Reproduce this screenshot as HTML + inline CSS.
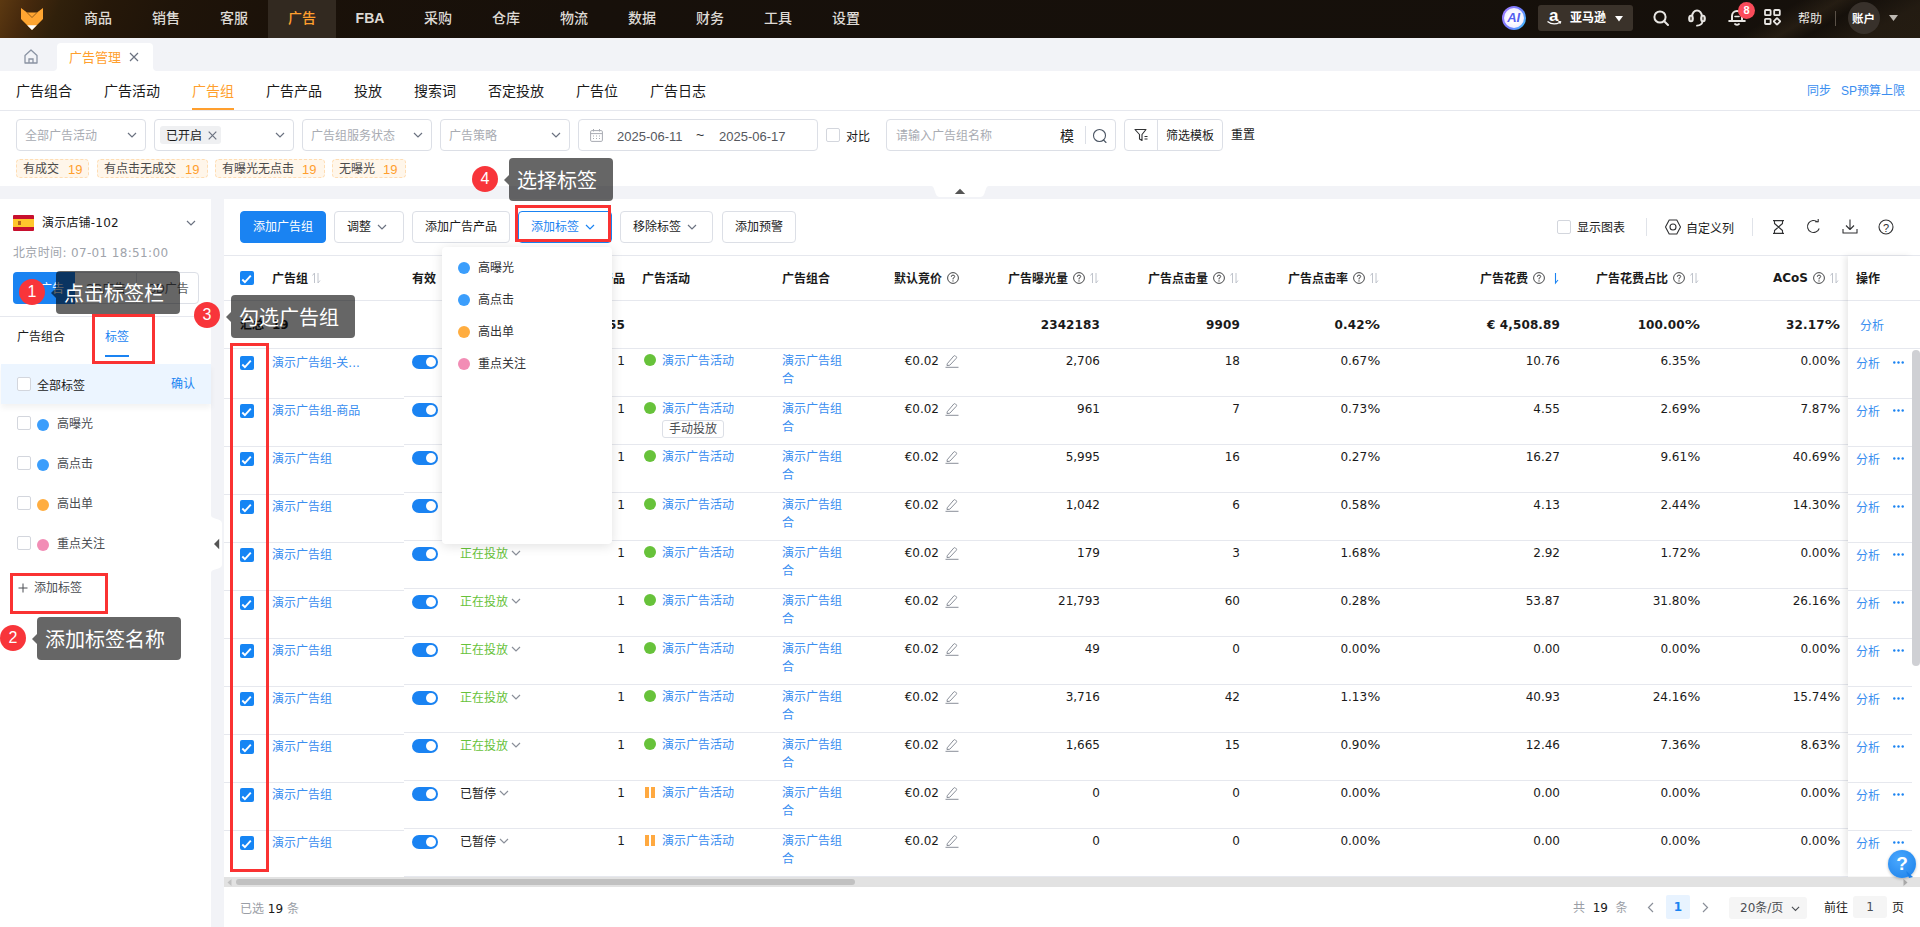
<!DOCTYPE html><html lang="zh-CN"><head><meta charset="utf-8"><title>广告管理</title><style>
*{box-sizing:border-box;margin:0;padding:0}
html,body{width:1920px;height:927px;overflow:hidden;background:#f2f3f7}
body{position:relative;font-family:"Liberation Sans","Noto Sans CJK SC",sans-serif;font-size:12px;color:#1a1a1a;-webkit-font-smoothing:antialiased}
.a{position:absolute;white-space:nowrap}
.t{position:absolute;white-space:nowrap;height:20px;line-height:20px;margin-top:1px}
.t.r,.t.n{margin-top:0}
.p{font-style:normal;display:inline-block;margin-left:1.5px;transform:scaleX(1.13);transform-origin:right center}
.b .p{margin-left:3.2px;transform:scaleX(1.27)}
.dv{font-family:"DejaVu Sans","Noto Sans CJK SC",sans-serif}
.b{font-weight:bold}
.blue{color:#3a8ef0}
.r{text-align:right}
/* top nav */
#nav{left:0;top:0;width:1920px;height:38px;background:linear-gradient(112deg,#5c3911 0%,#46290d 1.5%,#30200b 3.2%,#261809 5.5%,#1f1409 9%,#1a1109 16%,#17100a 30%,#15100b 100%)}
.ni{position:absolute;top:0;height:38px;line-height:36px;width:68px;text-align:center;font-size:14px;color:#dedad5;font-weight:500}
.ni.on{background:#322920;color:#ff9f2e}
.ni.b{font-weight:bold}
/* tabbar */
#tabbar{left:0;top:38px;width:1920px;height:33px;background:#f2f3f7}
#subnav{left:0;top:71px;width:1920px;height:40px;background:#fff;border-bottom:1px solid #e6e8ee}
.sn{position:absolute;top:1px;height:39px;line-height:39px;font-size:14px;color:#1a1a1a}
#filter{left:0;top:111px;width:1920px;height:75px;background:#fff}
.sel{position:absolute;top:8px;height:32px;border:1px solid #dcdfe6;border-radius:4px;background:#fff}
.ph{color:#a8abb2}
.tag{position:absolute;top:48px;height:19px;border:1px dashed #ffddb3;background:#fff6ea;border-radius:4px;line-height:17px;font-size:12px;color:#4a4a4a}
.tag i{font-style:normal;color:#ff9f2e;position:absolute;top:0.5px;font-size:13px}
/* panels */
#left{left:0;top:198px;width:211px;height:729px;background:linear-gradient(#f2f3f7 1px,#fff 1px)}
#main{left:224px;top:199px;width:1696px;height:728px;background:#fff}
.btn{position:absolute;top:211px;height:32px;border:1px solid #dcdfe6;border-radius:4px;background:#fff;line-height:30px;font-size:12px;color:#1a1a1a;padding-left:12px}
.cb{position:absolute;width:14px;height:14px;border:1px solid #d3d6dd;border-radius:2px;background:#fff}
.cbc{position:absolute;width:14px;height:14px;border-radius:2px;background:#1685f4}
.hl{position:absolute;height:1px;background:#e6e8ee}
.sw{position:absolute;width:26px;height:14px;border-radius:7px;background:#1a83f2}
.sw:after{content:"";position:absolute;right:2px;top:2px;width:10px;height:10px;border-radius:5px;background:#fff}
.dot{position:absolute;width:12px;height:12px;border-radius:6px}
.tip{position:absolute;background:rgba(0,0,0,.6);border-radius:4px;color:#fff;font-size:20px;white-space:nowrap}
.tip:before{content:"";position:absolute;left:-5px;top:50%;margin-top:-5px;border:5px solid transparent;border-left:0;border-right:5px solid rgba(0,0,0,.6)}
.num{position:absolute;width:26px;height:26px;border-radius:13px;background:#f8353a;color:#fff;font-size:16px;line-height:26px;text-align:center}
.rb{position:absolute;border:3px solid #fa3232}
svg{position:absolute;overflow:visible}
</style></head><body>
<div id="nav" class="a">
<div class="a" style="left:1500px;top:0;width:420px;height:38px;background:linear-gradient(150deg,rgba(255,255,255,0) 62%,rgba(120,95,60,.16) 70%,rgba(255,255,255,0) 76%,rgba(120,95,60,.14) 88%,rgba(90,70,40,.22) 100%)"></div>
<svg style="left:21px;top:8px" width="22" height="22" viewBox="0 0 22 22"><polygon points="0,0 6,4.5 16,4.5 22,0 22,11 11,22 0,11" fill="#ffa531"/><polygon points="6.2,17.2 15.8,17.2 11,22" fill="#fff"/><polyline points="6,4.5 11,9.5 16,4.5" fill="none" stroke="#7a4a14" stroke-width="0.8"/></svg>
<div class="ni" style="left:64px">商品</div>
<div class="ni" style="left:132px">销售</div>
<div class="ni" style="left:200px">客服</div>
<div class="ni on" style="left:268px">广告</div>
<div class="ni b" style="left:336px">FBA</div>
<div class="ni" style="left:404px">采购</div>
<div class="ni" style="left:472px">仓库</div>
<div class="ni" style="left:540px">物流</div>
<div class="ni" style="left:608px">数据</div>
<div class="ni" style="left:676px">财务</div>
<div class="ni" style="left:744px">工具</div>
<div class="ni" style="left:812px">设置</div>
<div class="a" style="left:1502px;top:6px;width:24px;height:24px;border-radius:12px;background:linear-gradient(120deg,#a57bff,#6d7dff 55%,#38c8ff);"></div>
<div class="a" style="left:1504px;top:8px;width:20px;height:20px;border-radius:10px;background:radial-gradient(circle,#ffffff 30%,#e6e0ff 100%);color:#5560f0;font-size:13px;font-weight:bold;font-style:italic;line-height:20px;text-align:center;letter-spacing:-0.3px;text-indent:-1px">AI</div>
<div class="a" style="left:1538px;top:5px;width:95px;height:26px;border-radius:3px;background:#3a322a"></div>
<div class="a" style="left:1549px;top:6px;font-size:17px;font-weight:bold;color:#fff;line-height:20px;font-family:'Liberation Sans',sans-serif">a</div>
<svg style="left:1547px;top:21px" width="15" height="5" viewBox="0 0 15 5"><path d="M0.5,0.5 Q6.5,5 13,1.2" fill="none" stroke="#fff" stroke-width="1.3"/><path d="M11.2,0.3 L14,0.7 L12.8,3" fill="none" stroke="#fff" stroke-width="1"/></svg>
<div class="t b" style="left:1570px;top:7px;color:#fff;font-size:12px">亚马逊</div>
<svg style="left:1615px;top:16px" width="8" height="6" viewBox="0 0 8 6"><polygon points="0,0 8,0 4,5.6" fill="#fff"/></svg>
<svg style="left:1653px;top:10px" width="17" height="17" viewBox="0 0 17 17"><circle cx="7" cy="7" r="5.6" fill="none" stroke="#e8e6e3" stroke-width="2"/><path d="M11.2,11.2 L15,15" stroke="#e8e6e3" stroke-width="2" stroke-linecap="round"/></svg>
<svg style="left:1687px;top:9px" width="20" height="18" viewBox="0 0 20 18"><path d="M5.2,7.5 V7 A4.8,5.6 0 0 1 14.8,7 V7.5" fill="none" stroke="#e8e6e3" stroke-width="2"/><ellipse cx="4" cy="9.5" rx="1.9" ry="2.9" fill="#6b655e" stroke="#e8e6e3" stroke-width="1.9"/><ellipse cx="16" cy="9.5" rx="1.9" ry="2.9" fill="#6b655e" stroke="#e8e6e3" stroke-width="1.9"/><path d="M15.5,12.5 Q15,16.3 10,16.6" fill="none" stroke="#e8e6e3" stroke-width="1.8" stroke-linecap="round"/></svg>
<svg style="left:1728px;top:8px" width="18" height="18" viewBox="0 0 18 18"><path d="M4,12.5 L4,8 A5,5 0 0 1 14,8 L14,12.5" fill="none" stroke="#e8e6e3" stroke-width="2"/><path d="M1.2,13 L16.8,13" stroke="#e8e6e3" stroke-width="2" stroke-linecap="round"/><path d="M7,16 Q9,17.6 11,16" fill="none" stroke="#e8e6e3" stroke-width="1.8" stroke-linecap="round"/><path d="M7,8.5 L11,8.5" stroke="#e8e6e3" stroke-width="1.6" stroke-linecap="round"/></svg>
<div class="a b" style="left:1738px;top:2px;width:17px;height:17px;border-radius:9px;background:#fa4b5a;color:#fff;font-size:11px;line-height:17px;text-align:center;font-family:'Liberation Sans',sans-serif">8</div>
<svg style="left:1764px;top:9px" width="17" height="17" viewBox="0 0 17 17"><rect x="1" y="1" width="5.6" height="5.2" rx="0.8" fill="none" stroke="#e8e6e3" stroke-width="1.8"/><rect x="10.2" y="1" width="5.6" height="5.2" rx="0.8" fill="none" stroke="#e8e6e3" stroke-width="1.8"/><rect x="1" y="9.8" width="5.6" height="5.2" rx="0.8" fill="none" stroke="#e8e6e3" stroke-width="1.8"/><rect x="10.6" y="10" width="4.8" height="4.8" rx="0.8" fill="none" stroke="#e8e6e3" stroke-width="1.8" transform="rotate(45 13 12.4)"/></svg>
<div class="t" style="left:1798px;top:8px;color:#e8e6e3;font-size:12px">帮助</div>
<div class="a" style="left:1835px;top:11px;width:1px;height:15px;background:#5a5148"></div>
<div class="a" style="left:1848px;top:2px;width:32px;height:32px;border-radius:16px;background:#38312b"></div>
<div class="t b" style="left:1852px;top:8px;color:#fff;font-size:11.5px">账户</div>
<svg style="left:1889px;top:15px" width="9" height="6" viewBox="0 0 9 6"><polygon points="0,0 9,0 4.5,6" fill="#bdb8b2"/></svg>
</div>
<div id="tabbar" class="a"></div>
<div class="a" style="left:57px;top:43px;width:96px;height:28px;background:#fff;border-radius:4px 4px 0 0"></div>
<div class="t" style="left:69px;top:47px;font-size:13px;color:#ff9f2e">广告管理</div>
<svg style="left:53px;top:67px" width="4" height="4" viewBox="0 0 4 4"><path d="M4,0 L4,4 L0,4 Q4,4 4,0 Z" fill="#fff"/></svg><svg style="left:153px;top:67px" width="4" height="4" viewBox="0 0 4 4"><path d="M0,0 L0,4 L4,4 Q0,4 0,0 Z" fill="#fff"/></svg>
<svg style="left:24px;top:49px" width="14" height="15" viewBox="0 0 14 15"><path d="M1,6.5 L7,1 L13,6.5 L13,14 L1,14 Z" fill="none" stroke="#8a93a3" stroke-width="1.3" stroke-linejoin="round"/><path d="M5,14 L5,10 L9,10 L9,14" fill="none" stroke="#8a93a3" stroke-width="1.3"/></svg>
<svg style="left:129px;top:52px" width="10" height="10" viewBox="0 0 10 10"><path d="M1,1 L9,9 M9,1 L1,9" stroke="#6b7280" stroke-width="1.2"/></svg>
<div id="subnav" class="a">
<div class="sn" style="left:16px;">广告组合</div>
<div class="sn" style="left:104px;">广告活动</div>
<div class="sn" style="left:192px;color:#ff9f2e">广告组</div>
<div class="sn" style="left:266px;">广告产品</div>
<div class="sn" style="left:354px;">投放</div>
<div class="sn" style="left:414px;">搜索词</div>
<div class="sn" style="left:488px;">否定投放</div>
<div class="sn" style="left:576px;">广告位</div>
<div class="sn" style="left:650px;">广告日志</div>
<div class="a" style="left:192px;top:37px;width:42px;height:2px;background:#ff9f2e"></div>
<div class="t blue" style="left:1807px;top:9px">同步</div><div class="t blue" style="left:1841px;top:9px">SP预算上限</div>
</div>
<div id="filter" class="a">
<div class="sel" style="left:16px;width:130px"><div class="t ph" style="left:8px;top:5px">全部广告活动</div><svg style="left:110px;top:12px" width="10" height="6" viewBox="0 0 10 6"><path d="M1,1 L5,5 L9,1" fill="none" stroke="#6b7280" stroke-width="1.2"/></svg></div>
<div class="sel" style="left:154px;width:140px"><div class="a" style="left:5px;top:6px;width:61px;height:18px;background:#eff0f2;border-radius:3px"></div><div class="t" style="left:11px;top:5px;color:#1a1a1a">已开启</div><svg style="left:53px;top:11px" width="9" height="9" viewBox="0 0 9 9"><path d="M0.7,0.7 L8.3,8.3 M8.3,0.7 L0.7,8.3" stroke="#6b7280" stroke-width="1.2"/></svg><svg style="left:120px;top:12px" width="10" height="6" viewBox="0 0 10 6"><path d="M1,1 L5,5 L9,1" fill="none" stroke="#6b7280" stroke-width="1.2"/></svg></div>
<div class="sel" style="left:302px;width:130px"><div class="t ph" style="left:8px;top:5px">广告组服务状态</div><svg style="left:110px;top:12px" width="10" height="6" viewBox="0 0 10 6"><path d="M1,1 L5,5 L9,1" fill="none" stroke="#6b7280" stroke-width="1.2"/></svg></div>
<div class="sel" style="left:440px;width:130px"><div class="t ph" style="left:8px;top:5px">广告策略</div><svg style="left:110px;top:12px" width="10" height="6" viewBox="0 0 10 6"><path d="M1,1 L5,5 L9,1" fill="none" stroke="#6b7280" stroke-width="1.2"/></svg></div>
<div class="sel" style="left:578px;width:240px">
<svg style="left:11px;top:9px" width="13" height="13" viewBox="0 0 13 13"><rect x="0.6" y="1.6" width="11.8" height="10.8" rx="1.2" fill="none" stroke="#a8abb2" stroke-width="1"/><path d="M0.6,4.6 L12.4,4.6 M3.5,0 L3.5,2.5 M9.5,0 L9.5,2.5" stroke="#a8abb2" stroke-width="1"/><path d="M3,7 h1 M6,7 h1 M9,7 h1 M3,9.5 h1 M6,9.5 h1 M9,9.5 h1" stroke="#a8abb2" stroke-width="1"/></svg>
<div class="t" style="left:38px;top:6px;font-size:13px;color:#55585e">2025-06-11</div><div class="t" style="left:117px;top:4px;font-size:14px;color:#303133">~</div><div class="t" style="left:140px;top:6px;font-size:13px;color:#55585e">2025-06-17</div></div>
<div class="cb" style="left:826px;top:17px"></div><div class="t" style="left:846px;top:15px">对比</div>
<div class="sel" style="left:886px;width:230px"><div class="t ph" style="left:9px;top:5px">请输入广告组名称</div><div class="t" style="left:173px;top:5px;font-size:14px;color:#1a1a1a">模</div><div class="a" style="left:198px;top:6px;width:1px;height:18px;background:#dcdfe6"></div>
<svg style="left:205px;top:8px" width="16" height="16" viewBox="0 0 16 16"><circle cx="7.5" cy="7.5" r="6" fill="none" stroke="#4b5563" stroke-width="1.1"/><path d="M11.5,12 L14,14.5" stroke="#4b5563" stroke-width="1.1" stroke-linecap="round"/></svg></div>
<div class="sel" style="left:1124px;width:99px"><div class="a" style="left:32px;top:0;width:1px;height:30px;background:#dcdfe6"></div>
<svg style="left:9px;top:8px" width="15" height="15" viewBox="0 0 15 15"><path d="M1,1.5 L12,1.5 L8,6.5 L8,12.5 L5.5,11 L5.5,6.5 Z" fill="none" stroke="#303133" stroke-width="1.1" stroke-linejoin="round"/><path d="M10.5,8.5 h3 M10.5,11 h3" stroke="#303133" stroke-width="1.1"/></svg>
<div class="t" style="left:41px;top:5px">筛选模板</div></div>
<div class="t" style="left:1231px;top:13px">重置</div>
<div class="tag" style="left:16px;width:73px"><span style="position:absolute;left:6px;top:1px">有成交</span><i style="left:51px">19</i></div>
<div class="tag" style="left:97px;width:111px"><span style="position:absolute;left:6px;top:1px">有点击无成交</span><i style="left:87px">19</i></div>
<div class="tag" style="left:215px;width:110px"><span style="position:absolute;left:6px;top:1px">有曝光无点击</span><i style="left:86px">19</i></div>
<div class="tag" style="left:332px;width:74px"><span style="position:absolute;left:6px;top:1px">无曝光</span><i style="left:50px">19</i></div>
</div>
<svg style="left:931px;top:186px" width="58" height="12" viewBox="0 0 58 12"><path d="M0,0 C2,0 2.6,1.5 3.4,4 L4.8,8 Q5.8,11 9,11 L49,11 Q52.2,11 53.2,8 L54.6,4 C55.4,1.5 56,0 58,0 Z" fill="#fff"/><polygon points="23.8,8 34.2,8 29,2.8" fill="#555"/></svg>
<div id="left" class="a">
<div class="a" style="left:13px;top:17px;width:21px;height:16px;background:#c8102e;border-radius:1px;overflow:hidden"><div class="a" style="left:0;top:4px;width:21px;height:8px;background:#ffc72c"></div><div class="a" style="left:5px;top:6px;width:3px;height:4px;background:#b5651d"></div></div>
<div class="t dv" style="left:42px;top:14px;color:#1a1a1a;letter-spacing:0.2px">演示店铺-102</div>
<svg style="left:186px;top:22px" width="10" height="6" viewBox="0 0 10 6"><path d="M1,1 L5,5 L9,1" fill="none" stroke="#6b7280" stroke-width="1.2"/></svg>
<div class="t dv" style="left:13px;top:44px;color:#a0a4ab;font-size:12px;letter-spacing:0.35px">北京时间: 07-01 18:51:00</div>
<div class="a" style="left:13px;top:74px;width:186px;height:32px;border:1px solid #dcdfe6;border-radius:4px;background:#fff"></div>
<div class="a" style="left:13px;top:74px;width:62px;height:32px;border-radius:4px 0 0 4px;background:#1a83f2"></div>
<div class="a" style="left:136px;top:75px;width:1px;height:30px;background:#dcdfe6"></div>
<div class="t" style="left:24px;top:80px;color:#fff">SP广告</div><div class="t" style="left:86px;top:80px;color:#606266">SB广告</div><div class="t" style="left:148px;top:80px;color:#606266">SD广告</div>
<div class="hl" style="left:0;top:118px;width:211px"></div>
<div class="t" style="left:17px;top:128px;color:#1a1a1a">广告组合</div><div class="t" style="left:105px;top:128px;color:#1a83f2">标签</div>
<div class="a" style="left:105px;top:157px;width:24px;height:2px;background:#1a83f2"></div>
<div class="a" style="left:1px;top:166px;width:210px;height:40px;background:#ecf5ff;box-shadow:0 4px 6px rgba(0,0,0,.05)"></div>
<div class="cb" style="left:17px;top:179px"></div><div class="t" style="left:37px;top:177px">全部标签</div><div class="t" style="left:171px;top:175px;color:#1a83f2">确认</div>
<div class="cb" style="left:17px;top:218px"></div><div class="dot" style="left:37px;top:221px;background:#3b9efc"></div><div class="t" style="left:57px;top:215px;color:#4a4d52">高曝光</div>
<div class="cb" style="left:17px;top:258px"></div><div class="dot" style="left:37px;top:261px;background:#3b9efc"></div><div class="t" style="left:57px;top:255px;color:#4a4d52">高点击</div>
<div class="cb" style="left:17px;top:298px"></div><div class="dot" style="left:37px;top:301px;background:#ffad40"></div><div class="t" style="left:57px;top:295px;color:#4a4d52">高出单</div>
<div class="cb" style="left:17px;top:338px"></div><div class="dot" style="left:37px;top:341px;background:#f28db5"></div><div class="t" style="left:57px;top:335px;color:#4a4d52">重点关注</div>
<svg style="left:18px;top:385px" width="10" height="10" viewBox="0 0 10 10"><path d="M5,0.5 V9.5 M0.5,5 H9.5" stroke="#4a4d52" stroke-width="1"/></svg><div class="t" style="left:34px;top:379px;color:#4a4d52">添加标签</div>
</div>
<svg style="left:211px;top:515px" width="12" height="58" viewBox="0 0 12 58"><path d="M0,0 C0,2 1.5,2.6 4,3.4 L8,4.8 Q11,5.8 11,9 L11,49 Q11,52.2 8,53.2 L4,54.6 C1.5,55.4 0,56 0,58 Z" fill="#fff"/><polygon points="8.2,23.8 8.2,34.2 3,29" fill="#555"/></svg>
<div id="main" class="a"></div>
<div class="btn" style="left:240px;width:86px;background:#1a83f2;border-color:#1a83f2;color:#fff">添加广告组</div>
<div class="btn" style="left:334px;width:70px">调整<svg style="left:42px;top:12px" width="10" height="6" viewBox="0 0 10 6"><path d="M1,1 L5,5 L9,1" fill="none" stroke="#6b7280" stroke-width="1.2"/></svg></div>
<div class="btn" style="left:412px;width:98px">添加广告产品</div>
<div class="btn" style="left:518px;width:94px;border-color:#1a83f2;color:#1a83f2">添加标签<svg style="left:66px;top:12px" width="10" height="6" viewBox="0 0 10 6"><path d="M1,1 L5,5 L9,1" fill="none" stroke="#1a83f2" stroke-width="1.2"/></svg></div>
<div class="btn" style="left:620px;width:93px">移除标签<svg style="left:66px;top:12px" width="10" height="6" viewBox="0 0 10 6"><path d="M1,1 L5,5 L9,1" fill="none" stroke="#6b7280" stroke-width="1.2"/></svg></div>
<div class="btn" style="left:722px;width:74px">添加预警</div>
<div class="cb" style="left:1557px;top:220px"></div><div class="t" style="left:1577px;top:217px">显示图表</div>
<div class="a" style="left:1646px;top:218px;width:1px;height:18px;background:#e0e3e9"></div>
<svg style="left:1665px;top:219px" width="16" height="16" viewBox="0 0 16 16"><polygon points="4.2,1 11.8,1 15.5,8 11.8,15 4.2,15 0.5,8" fill="none" stroke="#303133" stroke-width="1.1" stroke-linejoin="round"/><circle cx="8" cy="8" r="3" fill="none" stroke="#303133" stroke-width="1.1"/></svg>
<div class="t" style="left:1686px;top:218px">自定义列</div>
<div class="a" style="left:1752px;top:218px;width:1px;height:18px;background:#e0e3e9"></div>
<svg style="left:1772px;top:220px" width="13" height="14" viewBox="0 0 13 14"><path d="M1,0.6 H12 M1,13.4 H12 M2.5,0.6 V3.5 L6.5,7 L10.5,3.5 V0.6 M2.5,13.4 V10.5 L6.5,7 L10.5,10.5 V13.4" fill="none" stroke="#303133" stroke-width="1.1" stroke-linejoin="round"/></svg>
<svg style="left:1806px;top:219px" width="15" height="15" viewBox="0 0 15 15"><path d="M13.2,9.5 A6,6 0 1 1 11.5,3" fill="none" stroke="#303133" stroke-width="1.1"/><path d="M9,2.8 H12.2 V0" fill="none" stroke="#303133" stroke-width="1.1"/></svg>
<svg style="left:1842px;top:219px" width="16" height="15" viewBox="0 0 16 15"><path d="M8,0.5 V10 M4,6.5 L8,10.5 L12,6.5 M1,10 V14 H15 V10" fill="none" stroke="#303133" stroke-width="1.1" stroke-linejoin="round"/></svg>
<svg style="left:1878px;top:219px" width="16" height="16" viewBox="0 0 16 16"><circle cx="8" cy="8" r="7" fill="none" stroke="#303133" stroke-width="1.1"/></svg><div class="t" style="left:1878px;top:217px;width:16px;text-align:center;font-size:11px;color:#303133">?</div>
<div class="hl" style="left:224px;top:255px;width:1696px"></div>
<div class="cbc" style="left:240px;top:271px"><svg style="left:0;top:0" width="14" height="14" viewBox="0 0 14 14"><path d="M2.3,8.5 L4.9,11.1 L10.8,4.6" fill="none" stroke="#fff" stroke-width="1.9"/></svg></div>
<div class="t b" style="left:272px;top:268px">广告组</div>
<svg style="left:311.5px;top:272.0px" width="9" height="12" viewBox="0 0 9 12"><path d="M2.5,11 V1 L0.5,3.5" fill="none" stroke="#c0c4cc" stroke-width="1"/><path d="M6,1 V11 L8,8.5" fill="none" stroke="#c0c4cc" stroke-width="1"/></svg>
<div class="t b" style="left:412px;top:268px">有效</div>
<div class="t b" style="left:460px;top:268px">状态</div>
<div class="t b" style="right:1295px;top:268px">广告产品</div>
<div class="t b" style="left:642px;top:268px">广告活动</div>
<div class="t b" style="left:782px;top:268px">广告组合</div>
<div class="t b" style="right:978px;top:268px">默认竞价</div>
<svg style="left:947.0px;top:272.0px" width="12" height="12" viewBox="0 0 12 12"><circle cx="6" cy="6" r="5.4" fill="none" stroke="#303133" stroke-width="0.9"/><path d="M4.3,4.8 Q4.3,3.1 6,3.1 Q7.7,3.1 7.7,4.6 Q7.7,5.6 6,6.3 L6,7.4" fill="none" stroke="#303133" stroke-width="0.9"/><circle cx="6" cy="8.9" r="0.6" fill="#303133"/></svg>
<div class="t b" style="right:852px;top:268px">广告曝光量</div>
<svg style="left:1073.0px;top:272.0px" width="12" height="12" viewBox="0 0 12 12"><circle cx="6" cy="6" r="5.4" fill="none" stroke="#303133" stroke-width="0.9"/><path d="M4.3,4.8 Q4.3,3.1 6,3.1 Q7.7,3.1 7.7,4.6 Q7.7,5.6 6,6.3 L6,7.4" fill="none" stroke="#303133" stroke-width="0.9"/><circle cx="6" cy="8.9" r="0.6" fill="#303133"/></svg>
<svg style="left:1089.5px;top:272.0px" width="9" height="12" viewBox="0 0 9 12"><path d="M2.5,11 V1 L0.5,3.5" fill="none" stroke="#c0c4cc" stroke-width="1"/><path d="M6,1 V11 L8,8.5" fill="none" stroke="#c0c4cc" stroke-width="1"/></svg>
<div class="t b" style="right:712px;top:268px">广告点击量</div>
<svg style="left:1213.0px;top:272.0px" width="12" height="12" viewBox="0 0 12 12"><circle cx="6" cy="6" r="5.4" fill="none" stroke="#303133" stroke-width="0.9"/><path d="M4.3,4.8 Q4.3,3.1 6,3.1 Q7.7,3.1 7.7,4.6 Q7.7,5.6 6,6.3 L6,7.4" fill="none" stroke="#303133" stroke-width="0.9"/><circle cx="6" cy="8.9" r="0.6" fill="#303133"/></svg>
<svg style="left:1229.5px;top:272.0px" width="9" height="12" viewBox="0 0 9 12"><path d="M2.5,11 V1 L0.5,3.5" fill="none" stroke="#c0c4cc" stroke-width="1"/><path d="M6,1 V11 L8,8.5" fill="none" stroke="#c0c4cc" stroke-width="1"/></svg>
<div class="t b" style="right:572px;top:268px">广告点击率</div>
<svg style="left:1353.0px;top:272.0px" width="12" height="12" viewBox="0 0 12 12"><circle cx="6" cy="6" r="5.4" fill="none" stroke="#303133" stroke-width="0.9"/><path d="M4.3,4.8 Q4.3,3.1 6,3.1 Q7.7,3.1 7.7,4.6 Q7.7,5.6 6,6.3 L6,7.4" fill="none" stroke="#303133" stroke-width="0.9"/><circle cx="6" cy="8.9" r="0.6" fill="#303133"/></svg>
<svg style="left:1369.5px;top:272.0px" width="9" height="12" viewBox="0 0 9 12"><path d="M2.5,11 V1 L0.5,3.5" fill="none" stroke="#c0c4cc" stroke-width="1"/><path d="M6,1 V11 L8,8.5" fill="none" stroke="#c0c4cc" stroke-width="1"/></svg>
<div class="t b" style="right:392px;top:268px">广告花费</div>
<svg style="left:1533.0px;top:272.0px" width="12" height="12" viewBox="0 0 12 12"><circle cx="6" cy="6" r="5.4" fill="none" stroke="#303133" stroke-width="0.9"/><path d="M4.3,4.8 Q4.3,3.1 6,3.1 Q7.7,3.1 7.7,4.6 Q7.7,5.6 6,6.3 L6,7.4" fill="none" stroke="#303133" stroke-width="0.9"/><circle cx="6" cy="8.9" r="0.6" fill="#303133"/></svg>
<svg style="left:1553px;top:272px" width="6" height="12" viewBox="0 0 6 12"><path d="M2.5,1 V11 L5,8" fill="none" stroke="#1a83f2" stroke-width="1.1"/></svg>
<div class="t b" style="right:252px;top:268px">广告花费占比</div>
<svg style="left:1673.0px;top:272.0px" width="12" height="12" viewBox="0 0 12 12"><circle cx="6" cy="6" r="5.4" fill="none" stroke="#303133" stroke-width="0.9"/><path d="M4.3,4.8 Q4.3,3.1 6,3.1 Q7.7,3.1 7.7,4.6 Q7.7,5.6 6,6.3 L6,7.4" fill="none" stroke="#303133" stroke-width="0.9"/><circle cx="6" cy="8.9" r="0.6" fill="#303133"/></svg>
<svg style="left:1689.5px;top:272.0px" width="9" height="12" viewBox="0 0 9 12"><path d="M2.5,11 V1 L0.5,3.5" fill="none" stroke="#c0c4cc" stroke-width="1"/><path d="M6,1 V11 L8,8.5" fill="none" stroke="#c0c4cc" stroke-width="1"/></svg>
<div class="t b dv n" style="right:112px;top:268px">ACoS</div>
<svg style="left:1813.0px;top:272.0px" width="12" height="12" viewBox="0 0 12 12"><circle cx="6" cy="6" r="5.4" fill="none" stroke="#303133" stroke-width="0.9"/><path d="M4.3,4.8 Q4.3,3.1 6,3.1 Q7.7,3.1 7.7,4.6 Q7.7,5.6 6,6.3 L6,7.4" fill="none" stroke="#303133" stroke-width="0.9"/><circle cx="6" cy="8.9" r="0.6" fill="#303133"/></svg>
<svg style="left:1829.5px;top:272.0px" width="9" height="12" viewBox="0 0 9 12"><path d="M2.5,11 V1 L0.5,3.5" fill="none" stroke="#c0c4cc" stroke-width="1"/><path d="M6,1 V11 L8,8.5" fill="none" stroke="#c0c4cc" stroke-width="1"/></svg>
<div class="hl" style="left:224px;top:300px;width:1696px"></div>
<div class="t b" style="left:240px;top:314px">汇总</div><div class="t b dv" style="left:272px;top:314px">19</div>
<div class="t b dv" style="right:1295px;top:314px;letter-spacing:0.12px">55</div>
<div class="t b dv" style="right:820px;top:314px;letter-spacing:0.12px">2342183</div>
<div class="t b dv" style="right:680px;top:314px;letter-spacing:0.12px">9909</div>
<div class="t b dv" style="right:540px;top:314px;letter-spacing:0.12px">0.42<i class="p">%</i></div>
<div class="t b dv" style="right:360px;top:314px;letter-spacing:0.12px">€ 4,508.89</div>
<div class="t b dv" style="right:220px;top:314px;letter-spacing:0.12px">100.00<i class="p">%</i></div>
<div class="t b dv" style="right:80px;top:314px;letter-spacing:0.12px">32.17<i class="p">%</i></div>
<div class="hl" style="left:224px;top:348px;width:1696px"></div>
<div class="cbc" style="left:240px;top:356px"><svg style="left:0;top:0" width="14" height="14" viewBox="0 0 14 14"><path d="M2.3,8.5 L4.9,11.1 L10.8,4.6" fill="none" stroke="#fff" stroke-width="1.9"/></svg></div>
<div class="t blue dv" style="left:272px;top:352px">演示广告组-关...</div>
<div class="sw" style="left:412px;top:355px"></div>
<div class="t" style="left:460px;top:351px;color:#67c23a">正在投放</div><svg style="left:511px;top:358px" width="10" height="6" viewBox="0 0 10 6"><path d="M1,1 L5,5 L9,1" fill="none" stroke="#8a8f99" stroke-width="1.2"/></svg>
<div class="dot" style="left:644px;top:354px;background:#67c23a"></div>
<div class="t dv r" style="right:1295px;top:351px">1</div>
<div class="t blue" style="left:662px;top:350px">演示广告活动</div>
<div class="a blue" style="left:782px;top:352px;width:62px;white-space:normal;line-height:18px">演示广告组合</div>
<div class="t dv r" style="right:981px;top:351px">€0.02</div>
<svg style="left:944.5px;top:353.5px" width="14" height="14" viewBox="0 0 14 14"><path d="M2.2,9.8 L8.8,2 Q9.6,1.2 10.5,2 L11.3,2.8 Q12,3.6 11.2,4.4 L4.8,11.2 L2,11.6 Z" fill="none" stroke="#8a8f99" stroke-width="1"/><path d="M0.5,13.3 H13.5" stroke="#8a8f99" stroke-width="1"/></svg>
<div class="t dv r" style="right:820px;top:351px">2,706</div>
<div class="t dv r" style="right:680px;top:351px">18</div>
<div class="t dv r" style="right:540px;top:351px">0.67<i class="p">%</i></div>
<div class="t dv r" style="right:360px;top:351px">10.76</div>
<div class="t dv r" style="right:220px;top:351px">6.35<i class="p">%</i></div>
<div class="t dv r" style="right:80px;top:351px">0.00<i class="p">%</i></div>
<div class="hl" style="left:404px;top:396px;width:1444px"></div>
<div class="hl" style="left:224px;top:398px;width:180px"></div>
<div class="cbc" style="left:240px;top:404px"><svg style="left:0;top:0" width="14" height="14" viewBox="0 0 14 14"><path d="M2.3,8.5 L4.9,11.1 L10.8,4.6" fill="none" stroke="#fff" stroke-width="1.9"/></svg></div>
<div class="t blue dv" style="left:272px;top:400px">演示广告组-商品</div>
<div class="sw" style="left:412px;top:403px"></div>
<div class="t" style="left:460px;top:399px;color:#67c23a">正在投放</div><svg style="left:511px;top:406px" width="10" height="6" viewBox="0 0 10 6"><path d="M1,1 L5,5 L9,1" fill="none" stroke="#8a8f99" stroke-width="1.2"/></svg>
<div class="dot" style="left:644px;top:402px;background:#67c23a"></div>
<div class="t dv r" style="right:1295px;top:399px">1</div>
<div class="t blue" style="left:662px;top:398px">演示广告活动</div>
<div class="a" style="left:662px;top:420px;width:62px;height:18px;border:1px solid #dcdfe6;border-radius:3px;line-height:17px;text-align:center;color:#4a4d52">手动投放</div>
<div class="a blue" style="left:782px;top:400px;width:62px;white-space:normal;line-height:18px">演示广告组合</div>
<div class="t dv r" style="right:981px;top:399px">€0.02</div>
<svg style="left:944.5px;top:401.5px" width="14" height="14" viewBox="0 0 14 14"><path d="M2.2,9.8 L8.8,2 Q9.6,1.2 10.5,2 L11.3,2.8 Q12,3.6 11.2,4.4 L4.8,11.2 L2,11.6 Z" fill="none" stroke="#8a8f99" stroke-width="1"/><path d="M0.5,13.3 H13.5" stroke="#8a8f99" stroke-width="1"/></svg>
<div class="t dv r" style="right:820px;top:399px">961</div>
<div class="t dv r" style="right:680px;top:399px">7</div>
<div class="t dv r" style="right:540px;top:399px">0.73<i class="p">%</i></div>
<div class="t dv r" style="right:360px;top:399px">4.55</div>
<div class="t dv r" style="right:220px;top:399px">2.69<i class="p">%</i></div>
<div class="t dv r" style="right:80px;top:399px">7.87<i class="p">%</i></div>
<div class="hl" style="left:404px;top:444px;width:1444px"></div>
<div class="hl" style="left:224px;top:446px;width:180px"></div>
<div class="cbc" style="left:240px;top:452px"><svg style="left:0;top:0" width="14" height="14" viewBox="0 0 14 14"><path d="M2.3,8.5 L4.9,11.1 L10.8,4.6" fill="none" stroke="#fff" stroke-width="1.9"/></svg></div>
<div class="t blue dv" style="left:272px;top:448px">演示广告组</div>
<div class="sw" style="left:412px;top:451px"></div>
<div class="t" style="left:460px;top:447px;color:#67c23a">正在投放</div><svg style="left:511px;top:454px" width="10" height="6" viewBox="0 0 10 6"><path d="M1,1 L5,5 L9,1" fill="none" stroke="#8a8f99" stroke-width="1.2"/></svg>
<div class="dot" style="left:644px;top:450px;background:#67c23a"></div>
<div class="t dv r" style="right:1295px;top:447px">1</div>
<div class="t blue" style="left:662px;top:446px">演示广告活动</div>
<div class="a blue" style="left:782px;top:448px;width:62px;white-space:normal;line-height:18px">演示广告组合</div>
<div class="t dv r" style="right:981px;top:447px">€0.02</div>
<svg style="left:944.5px;top:449.5px" width="14" height="14" viewBox="0 0 14 14"><path d="M2.2,9.8 L8.8,2 Q9.6,1.2 10.5,2 L11.3,2.8 Q12,3.6 11.2,4.4 L4.8,11.2 L2,11.6 Z" fill="none" stroke="#8a8f99" stroke-width="1"/><path d="M0.5,13.3 H13.5" stroke="#8a8f99" stroke-width="1"/></svg>
<div class="t dv r" style="right:820px;top:447px">5,995</div>
<div class="t dv r" style="right:680px;top:447px">16</div>
<div class="t dv r" style="right:540px;top:447px">0.27<i class="p">%</i></div>
<div class="t dv r" style="right:360px;top:447px">16.27</div>
<div class="t dv r" style="right:220px;top:447px">9.61<i class="p">%</i></div>
<div class="t dv r" style="right:80px;top:447px">40.69<i class="p">%</i></div>
<div class="hl" style="left:404px;top:492px;width:1444px"></div>
<div class="hl" style="left:224px;top:494px;width:180px"></div>
<div class="cbc" style="left:240px;top:500px"><svg style="left:0;top:0" width="14" height="14" viewBox="0 0 14 14"><path d="M2.3,8.5 L4.9,11.1 L10.8,4.6" fill="none" stroke="#fff" stroke-width="1.9"/></svg></div>
<div class="t blue dv" style="left:272px;top:496px">演示广告组</div>
<div class="sw" style="left:412px;top:499px"></div>
<div class="t" style="left:460px;top:495px;color:#67c23a">正在投放</div><svg style="left:511px;top:502px" width="10" height="6" viewBox="0 0 10 6"><path d="M1,1 L5,5 L9,1" fill="none" stroke="#8a8f99" stroke-width="1.2"/></svg>
<div class="dot" style="left:644px;top:498px;background:#67c23a"></div>
<div class="t dv r" style="right:1295px;top:495px">1</div>
<div class="t blue" style="left:662px;top:494px">演示广告活动</div>
<div class="a blue" style="left:782px;top:496px;width:62px;white-space:normal;line-height:18px">演示广告组合</div>
<div class="t dv r" style="right:981px;top:495px">€0.02</div>
<svg style="left:944.5px;top:497.5px" width="14" height="14" viewBox="0 0 14 14"><path d="M2.2,9.8 L8.8,2 Q9.6,1.2 10.5,2 L11.3,2.8 Q12,3.6 11.2,4.4 L4.8,11.2 L2,11.6 Z" fill="none" stroke="#8a8f99" stroke-width="1"/><path d="M0.5,13.3 H13.5" stroke="#8a8f99" stroke-width="1"/></svg>
<div class="t dv r" style="right:820px;top:495px">1,042</div>
<div class="t dv r" style="right:680px;top:495px">6</div>
<div class="t dv r" style="right:540px;top:495px">0.58<i class="p">%</i></div>
<div class="t dv r" style="right:360px;top:495px">4.13</div>
<div class="t dv r" style="right:220px;top:495px">2.44<i class="p">%</i></div>
<div class="t dv r" style="right:80px;top:495px">14.30<i class="p">%</i></div>
<div class="hl" style="left:404px;top:540px;width:1444px"></div>
<div class="hl" style="left:224px;top:542px;width:180px"></div>
<div class="cbc" style="left:240px;top:548px"><svg style="left:0;top:0" width="14" height="14" viewBox="0 0 14 14"><path d="M2.3,8.5 L4.9,11.1 L10.8,4.6" fill="none" stroke="#fff" stroke-width="1.9"/></svg></div>
<div class="t blue dv" style="left:272px;top:544px">演示广告组</div>
<div class="sw" style="left:412px;top:547px"></div>
<div class="t" style="left:460px;top:543px;color:#67c23a">正在投放</div><svg style="left:511px;top:550px" width="10" height="6" viewBox="0 0 10 6"><path d="M1,1 L5,5 L9,1" fill="none" stroke="#8a8f99" stroke-width="1.2"/></svg>
<div class="dot" style="left:644px;top:546px;background:#67c23a"></div>
<div class="t dv r" style="right:1295px;top:543px">1</div>
<div class="t blue" style="left:662px;top:542px">演示广告活动</div>
<div class="a blue" style="left:782px;top:544px;width:62px;white-space:normal;line-height:18px">演示广告组合</div>
<div class="t dv r" style="right:981px;top:543px">€0.02</div>
<svg style="left:944.5px;top:545.5px" width="14" height="14" viewBox="0 0 14 14"><path d="M2.2,9.8 L8.8,2 Q9.6,1.2 10.5,2 L11.3,2.8 Q12,3.6 11.2,4.4 L4.8,11.2 L2,11.6 Z" fill="none" stroke="#8a8f99" stroke-width="1"/><path d="M0.5,13.3 H13.5" stroke="#8a8f99" stroke-width="1"/></svg>
<div class="t dv r" style="right:820px;top:543px">179</div>
<div class="t dv r" style="right:680px;top:543px">3</div>
<div class="t dv r" style="right:540px;top:543px">1.68<i class="p">%</i></div>
<div class="t dv r" style="right:360px;top:543px">2.92</div>
<div class="t dv r" style="right:220px;top:543px">1.72<i class="p">%</i></div>
<div class="t dv r" style="right:80px;top:543px">0.00<i class="p">%</i></div>
<div class="hl" style="left:404px;top:588px;width:1444px"></div>
<div class="hl" style="left:224px;top:590px;width:180px"></div>
<div class="cbc" style="left:240px;top:596px"><svg style="left:0;top:0" width="14" height="14" viewBox="0 0 14 14"><path d="M2.3,8.5 L4.9,11.1 L10.8,4.6" fill="none" stroke="#fff" stroke-width="1.9"/></svg></div>
<div class="t blue dv" style="left:272px;top:592px">演示广告组</div>
<div class="sw" style="left:412px;top:595px"></div>
<div class="t" style="left:460px;top:591px;color:#67c23a">正在投放</div><svg style="left:511px;top:598px" width="10" height="6" viewBox="0 0 10 6"><path d="M1,1 L5,5 L9,1" fill="none" stroke="#8a8f99" stroke-width="1.2"/></svg>
<div class="dot" style="left:644px;top:594px;background:#67c23a"></div>
<div class="t dv r" style="right:1295px;top:591px">1</div>
<div class="t blue" style="left:662px;top:590px">演示广告活动</div>
<div class="a blue" style="left:782px;top:592px;width:62px;white-space:normal;line-height:18px">演示广告组合</div>
<div class="t dv r" style="right:981px;top:591px">€0.02</div>
<svg style="left:944.5px;top:593.5px" width="14" height="14" viewBox="0 0 14 14"><path d="M2.2,9.8 L8.8,2 Q9.6,1.2 10.5,2 L11.3,2.8 Q12,3.6 11.2,4.4 L4.8,11.2 L2,11.6 Z" fill="none" stroke="#8a8f99" stroke-width="1"/><path d="M0.5,13.3 H13.5" stroke="#8a8f99" stroke-width="1"/></svg>
<div class="t dv r" style="right:820px;top:591px">21,793</div>
<div class="t dv r" style="right:680px;top:591px">60</div>
<div class="t dv r" style="right:540px;top:591px">0.28<i class="p">%</i></div>
<div class="t dv r" style="right:360px;top:591px">53.87</div>
<div class="t dv r" style="right:220px;top:591px">31.80<i class="p">%</i></div>
<div class="t dv r" style="right:80px;top:591px">26.16<i class="p">%</i></div>
<div class="hl" style="left:404px;top:636px;width:1444px"></div>
<div class="hl" style="left:224px;top:638px;width:180px"></div>
<div class="cbc" style="left:240px;top:644px"><svg style="left:0;top:0" width="14" height="14" viewBox="0 0 14 14"><path d="M2.3,8.5 L4.9,11.1 L10.8,4.6" fill="none" stroke="#fff" stroke-width="1.9"/></svg></div>
<div class="t blue dv" style="left:272px;top:640px">演示广告组</div>
<div class="sw" style="left:412px;top:643px"></div>
<div class="t" style="left:460px;top:639px;color:#67c23a">正在投放</div><svg style="left:511px;top:646px" width="10" height="6" viewBox="0 0 10 6"><path d="M1,1 L5,5 L9,1" fill="none" stroke="#8a8f99" stroke-width="1.2"/></svg>
<div class="dot" style="left:644px;top:642px;background:#67c23a"></div>
<div class="t dv r" style="right:1295px;top:639px">1</div>
<div class="t blue" style="left:662px;top:638px">演示广告活动</div>
<div class="a blue" style="left:782px;top:640px;width:62px;white-space:normal;line-height:18px">演示广告组合</div>
<div class="t dv r" style="right:981px;top:639px">€0.02</div>
<svg style="left:944.5px;top:641.5px" width="14" height="14" viewBox="0 0 14 14"><path d="M2.2,9.8 L8.8,2 Q9.6,1.2 10.5,2 L11.3,2.8 Q12,3.6 11.2,4.4 L4.8,11.2 L2,11.6 Z" fill="none" stroke="#8a8f99" stroke-width="1"/><path d="M0.5,13.3 H13.5" stroke="#8a8f99" stroke-width="1"/></svg>
<div class="t dv r" style="right:820px;top:639px">49</div>
<div class="t dv r" style="right:680px;top:639px">0</div>
<div class="t dv r" style="right:540px;top:639px">0.00<i class="p">%</i></div>
<div class="t dv r" style="right:360px;top:639px">0.00</div>
<div class="t dv r" style="right:220px;top:639px">0.00<i class="p">%</i></div>
<div class="t dv r" style="right:80px;top:639px">0.00<i class="p">%</i></div>
<div class="hl" style="left:404px;top:684px;width:1444px"></div>
<div class="hl" style="left:224px;top:686px;width:180px"></div>
<div class="cbc" style="left:240px;top:692px"><svg style="left:0;top:0" width="14" height="14" viewBox="0 0 14 14"><path d="M2.3,8.5 L4.9,11.1 L10.8,4.6" fill="none" stroke="#fff" stroke-width="1.9"/></svg></div>
<div class="t blue dv" style="left:272px;top:688px">演示广告组</div>
<div class="sw" style="left:412px;top:691px"></div>
<div class="t" style="left:460px;top:687px;color:#67c23a">正在投放</div><svg style="left:511px;top:694px" width="10" height="6" viewBox="0 0 10 6"><path d="M1,1 L5,5 L9,1" fill="none" stroke="#8a8f99" stroke-width="1.2"/></svg>
<div class="dot" style="left:644px;top:690px;background:#67c23a"></div>
<div class="t dv r" style="right:1295px;top:687px">1</div>
<div class="t blue" style="left:662px;top:686px">演示广告活动</div>
<div class="a blue" style="left:782px;top:688px;width:62px;white-space:normal;line-height:18px">演示广告组合</div>
<div class="t dv r" style="right:981px;top:687px">€0.02</div>
<svg style="left:944.5px;top:689.5px" width="14" height="14" viewBox="0 0 14 14"><path d="M2.2,9.8 L8.8,2 Q9.6,1.2 10.5,2 L11.3,2.8 Q12,3.6 11.2,4.4 L4.8,11.2 L2,11.6 Z" fill="none" stroke="#8a8f99" stroke-width="1"/><path d="M0.5,13.3 H13.5" stroke="#8a8f99" stroke-width="1"/></svg>
<div class="t dv r" style="right:820px;top:687px">3,716</div>
<div class="t dv r" style="right:680px;top:687px">42</div>
<div class="t dv r" style="right:540px;top:687px">1.13<i class="p">%</i></div>
<div class="t dv r" style="right:360px;top:687px">40.93</div>
<div class="t dv r" style="right:220px;top:687px">24.16<i class="p">%</i></div>
<div class="t dv r" style="right:80px;top:687px">15.74<i class="p">%</i></div>
<div class="hl" style="left:404px;top:732px;width:1444px"></div>
<div class="hl" style="left:224px;top:734px;width:180px"></div>
<div class="cbc" style="left:240px;top:740px"><svg style="left:0;top:0" width="14" height="14" viewBox="0 0 14 14"><path d="M2.3,8.5 L4.9,11.1 L10.8,4.6" fill="none" stroke="#fff" stroke-width="1.9"/></svg></div>
<div class="t blue dv" style="left:272px;top:736px">演示广告组</div>
<div class="sw" style="left:412px;top:739px"></div>
<div class="t" style="left:460px;top:735px;color:#67c23a">正在投放</div><svg style="left:511px;top:742px" width="10" height="6" viewBox="0 0 10 6"><path d="M1,1 L5,5 L9,1" fill="none" stroke="#8a8f99" stroke-width="1.2"/></svg>
<div class="dot" style="left:644px;top:738px;background:#67c23a"></div>
<div class="t dv r" style="right:1295px;top:735px">1</div>
<div class="t blue" style="left:662px;top:734px">演示广告活动</div>
<div class="a blue" style="left:782px;top:736px;width:62px;white-space:normal;line-height:18px">演示广告组合</div>
<div class="t dv r" style="right:981px;top:735px">€0.02</div>
<svg style="left:944.5px;top:737.5px" width="14" height="14" viewBox="0 0 14 14"><path d="M2.2,9.8 L8.8,2 Q9.6,1.2 10.5,2 L11.3,2.8 Q12,3.6 11.2,4.4 L4.8,11.2 L2,11.6 Z" fill="none" stroke="#8a8f99" stroke-width="1"/><path d="M0.5,13.3 H13.5" stroke="#8a8f99" stroke-width="1"/></svg>
<div class="t dv r" style="right:820px;top:735px">1,665</div>
<div class="t dv r" style="right:680px;top:735px">15</div>
<div class="t dv r" style="right:540px;top:735px">0.90<i class="p">%</i></div>
<div class="t dv r" style="right:360px;top:735px">12.46</div>
<div class="t dv r" style="right:220px;top:735px">7.36<i class="p">%</i></div>
<div class="t dv r" style="right:80px;top:735px">8.63<i class="p">%</i></div>
<div class="hl" style="left:404px;top:780px;width:1444px"></div>
<div class="hl" style="left:224px;top:782px;width:180px"></div>
<div class="cbc" style="left:240px;top:788px"><svg style="left:0;top:0" width="14" height="14" viewBox="0 0 14 14"><path d="M2.3,8.5 L4.9,11.1 L10.8,4.6" fill="none" stroke="#fff" stroke-width="1.9"/></svg></div>
<div class="t blue dv" style="left:272px;top:784px">演示广告组</div>
<div class="sw" style="left:412px;top:787px"></div>
<div class="t" style="left:460px;top:783px;color:#1a1a1a">已暂停</div><svg style="left:499px;top:790px" width="10" height="6" viewBox="0 0 10 6"><path d="M1,1 L5,5 L9,1" fill="none" stroke="#8a8f99" stroke-width="1.2"/></svg>
<div class="a" style="left:645px;top:787px;width:4px;height:11px;background:#ffa940"></div><div class="a" style="left:651px;top:787px;width:4px;height:11px;background:#ffa940"></div>
<div class="t dv r" style="right:1295px;top:783px">1</div>
<div class="t blue" style="left:662px;top:782px">演示广告活动</div>
<div class="a blue" style="left:782px;top:784px;width:62px;white-space:normal;line-height:18px">演示广告组合</div>
<div class="t dv r" style="right:981px;top:783px">€0.02</div>
<svg style="left:944.5px;top:785.5px" width="14" height="14" viewBox="0 0 14 14"><path d="M2.2,9.8 L8.8,2 Q9.6,1.2 10.5,2 L11.3,2.8 Q12,3.6 11.2,4.4 L4.8,11.2 L2,11.6 Z" fill="none" stroke="#8a8f99" stroke-width="1"/><path d="M0.5,13.3 H13.5" stroke="#8a8f99" stroke-width="1"/></svg>
<div class="t dv r" style="right:820px;top:783px">0</div>
<div class="t dv r" style="right:680px;top:783px">0</div>
<div class="t dv r" style="right:540px;top:783px">0.00<i class="p">%</i></div>
<div class="t dv r" style="right:360px;top:783px">0.00</div>
<div class="t dv r" style="right:220px;top:783px">0.00<i class="p">%</i></div>
<div class="t dv r" style="right:80px;top:783px">0.00<i class="p">%</i></div>
<div class="hl" style="left:404px;top:828px;width:1444px"></div>
<div class="hl" style="left:224px;top:830px;width:180px"></div>
<div class="cbc" style="left:240px;top:836px"><svg style="left:0;top:0" width="14" height="14" viewBox="0 0 14 14"><path d="M2.3,8.5 L4.9,11.1 L10.8,4.6" fill="none" stroke="#fff" stroke-width="1.9"/></svg></div>
<div class="t blue dv" style="left:272px;top:832px">演示广告组</div>
<div class="sw" style="left:412px;top:835px"></div>
<div class="t" style="left:460px;top:831px;color:#1a1a1a">已暂停</div><svg style="left:499px;top:838px" width="10" height="6" viewBox="0 0 10 6"><path d="M1,1 L5,5 L9,1" fill="none" stroke="#8a8f99" stroke-width="1.2"/></svg>
<div class="a" style="left:645px;top:835px;width:4px;height:11px;background:#ffa940"></div><div class="a" style="left:651px;top:835px;width:4px;height:11px;background:#ffa940"></div>
<div class="t dv r" style="right:1295px;top:831px">1</div>
<div class="t blue" style="left:662px;top:830px">演示广告活动</div>
<div class="a blue" style="left:782px;top:832px;width:62px;white-space:normal;line-height:18px">演示广告组合</div>
<div class="t dv r" style="right:981px;top:831px">€0.02</div>
<svg style="left:944.5px;top:833.5px" width="14" height="14" viewBox="0 0 14 14"><path d="M2.2,9.8 L8.8,2 Q9.6,1.2 10.5,2 L11.3,2.8 Q12,3.6 11.2,4.4 L4.8,11.2 L2,11.6 Z" fill="none" stroke="#8a8f99" stroke-width="1"/><path d="M0.5,13.3 H13.5" stroke="#8a8f99" stroke-width="1"/></svg>
<div class="t dv r" style="right:820px;top:831px">0</div>
<div class="t dv r" style="right:680px;top:831px">0</div>
<div class="t dv r" style="right:540px;top:831px">0.00<i class="p">%</i></div>
<div class="t dv r" style="right:360px;top:831px">0.00</div>
<div class="t dv r" style="right:220px;top:831px">0.00<i class="p">%</i></div>
<div class="t dv r" style="right:80px;top:831px">0.00<i class="p">%</i></div>
<div class="hl" style="left:404px;top:876px;width:1444px"></div>
<div class="hl" style="left:224px;top:878px;width:180px"></div>
<div class="a" style="left:1848px;top:256px;width:64px;height:620px;background:#fff;box-shadow:-3px 0 6px rgba(0,0,0,.085)"></div>
<div class="a" style="left:1912px;top:256px;width:8px;height:620px;background:#fff"></div>
<div class="hl" style="left:1848px;top:300px;width:72px"></div><div class="hl" style="left:1848px;top:348px;width:72px"></div>
<div class="t b" style="left:1856px;top:268px">操作</div>
<div class="t blue" style="left:1860px;top:315px">分析</div>
<div class="t blue" style="left:1856px;top:352.5px">分析</div>
<svg style="left:1893px;top:360.5px" width="11" height="3" viewBox="0 0 11 3"><circle cx="1.3" cy="1.5" r="1.2" fill="#1a83f2"/><circle cx="5.5" cy="1.5" r="1.2" fill="#1a83f2"/><circle cx="9.7" cy="1.5" r="1.2" fill="#1a83f2"/></svg>
<div class="hl" style="left:1848px;top:398px;width:64px"></div>
<div class="t blue" style="left:1856px;top:400.5px">分析</div>
<svg style="left:1893px;top:408.5px" width="11" height="3" viewBox="0 0 11 3"><circle cx="1.3" cy="1.5" r="1.2" fill="#1a83f2"/><circle cx="5.5" cy="1.5" r="1.2" fill="#1a83f2"/><circle cx="9.7" cy="1.5" r="1.2" fill="#1a83f2"/></svg>
<div class="hl" style="left:1848px;top:446px;width:64px"></div>
<div class="t blue" style="left:1856px;top:448.5px">分析</div>
<svg style="left:1893px;top:456.5px" width="11" height="3" viewBox="0 0 11 3"><circle cx="1.3" cy="1.5" r="1.2" fill="#1a83f2"/><circle cx="5.5" cy="1.5" r="1.2" fill="#1a83f2"/><circle cx="9.7" cy="1.5" r="1.2" fill="#1a83f2"/></svg>
<div class="hl" style="left:1848px;top:494px;width:64px"></div>
<div class="t blue" style="left:1856px;top:496.5px">分析</div>
<svg style="left:1893px;top:504.5px" width="11" height="3" viewBox="0 0 11 3"><circle cx="1.3" cy="1.5" r="1.2" fill="#1a83f2"/><circle cx="5.5" cy="1.5" r="1.2" fill="#1a83f2"/><circle cx="9.7" cy="1.5" r="1.2" fill="#1a83f2"/></svg>
<div class="hl" style="left:1848px;top:542px;width:64px"></div>
<div class="t blue" style="left:1856px;top:544.5px">分析</div>
<svg style="left:1893px;top:552.5px" width="11" height="3" viewBox="0 0 11 3"><circle cx="1.3" cy="1.5" r="1.2" fill="#1a83f2"/><circle cx="5.5" cy="1.5" r="1.2" fill="#1a83f2"/><circle cx="9.7" cy="1.5" r="1.2" fill="#1a83f2"/></svg>
<div class="hl" style="left:1848px;top:590px;width:64px"></div>
<div class="t blue" style="left:1856px;top:592.5px">分析</div>
<svg style="left:1893px;top:600.5px" width="11" height="3" viewBox="0 0 11 3"><circle cx="1.3" cy="1.5" r="1.2" fill="#1a83f2"/><circle cx="5.5" cy="1.5" r="1.2" fill="#1a83f2"/><circle cx="9.7" cy="1.5" r="1.2" fill="#1a83f2"/></svg>
<div class="hl" style="left:1848px;top:638px;width:64px"></div>
<div class="t blue" style="left:1856px;top:640.5px">分析</div>
<svg style="left:1893px;top:648.5px" width="11" height="3" viewBox="0 0 11 3"><circle cx="1.3" cy="1.5" r="1.2" fill="#1a83f2"/><circle cx="5.5" cy="1.5" r="1.2" fill="#1a83f2"/><circle cx="9.7" cy="1.5" r="1.2" fill="#1a83f2"/></svg>
<div class="hl" style="left:1848px;top:686px;width:64px"></div>
<div class="t blue" style="left:1856px;top:688.5px">分析</div>
<svg style="left:1893px;top:696.5px" width="11" height="3" viewBox="0 0 11 3"><circle cx="1.3" cy="1.5" r="1.2" fill="#1a83f2"/><circle cx="5.5" cy="1.5" r="1.2" fill="#1a83f2"/><circle cx="9.7" cy="1.5" r="1.2" fill="#1a83f2"/></svg>
<div class="hl" style="left:1848px;top:734px;width:64px"></div>
<div class="t blue" style="left:1856px;top:736.5px">分析</div>
<svg style="left:1893px;top:744.5px" width="11" height="3" viewBox="0 0 11 3"><circle cx="1.3" cy="1.5" r="1.2" fill="#1a83f2"/><circle cx="5.5" cy="1.5" r="1.2" fill="#1a83f2"/><circle cx="9.7" cy="1.5" r="1.2" fill="#1a83f2"/></svg>
<div class="hl" style="left:1848px;top:782px;width:64px"></div>
<div class="t blue" style="left:1856px;top:784.5px">分析</div>
<svg style="left:1893px;top:792.5px" width="11" height="3" viewBox="0 0 11 3"><circle cx="1.3" cy="1.5" r="1.2" fill="#1a83f2"/><circle cx="5.5" cy="1.5" r="1.2" fill="#1a83f2"/><circle cx="9.7" cy="1.5" r="1.2" fill="#1a83f2"/></svg>
<div class="hl" style="left:1848px;top:830px;width:64px"></div>
<div class="t blue" style="left:1856px;top:832.5px">分析</div>
<svg style="left:1893px;top:840.5px" width="11" height="3" viewBox="0 0 11 3"><circle cx="1.3" cy="1.5" r="1.2" fill="#1a83f2"/><circle cx="5.5" cy="1.5" r="1.2" fill="#1a83f2"/><circle cx="9.7" cy="1.5" r="1.2" fill="#1a83f2"/></svg>
<div class="hl" style="left:1848px;top:878px;width:64px"></div>
<div class="a" style="left:1912px;top:350px;width:8px;height:316px;background:#cfd0d4;border-radius:4px"></div>
<div class="a" style="left:224px;top:877px;width:1696px;height:10px;background:#e2e2e2"></div>
<div class="a" style="left:236px;top:879px;width:619px;height:6px;background:#c1c1c1;border-radius:3px"></div>
<svg style="left:227px;top:879px" width="5" height="7" viewBox="0 0 5 7"><polygon points="4.5,0 4.5,7 0.5,3.5" fill="#c1c1c1"/></svg>
<svg style="left:1903px;top:879px" width="5" height="7" viewBox="0 0 5 7"><polygon points="0.5,0 0.5,7 4.5,3.5" fill="#a8a8a8"/></svg>
<div class="a" style="left:224px;top:887px;width:1696px;height:40px;background:#fff"></div>
<div class="t dv" style="left:240px;top:898px;color:#9a9ea6">已选 <span style="color:#1a1a1a">19</span> 条</div>
<div class="t dv" style="left:1573px;top:897px;color:#9a9ea6">共&nbsp; <span style="color:#1a1a1a">19</span> &nbsp;条</div>
<svg style="left:1647px;top:902px" width="7" height="11" viewBox="0 0 7 11"><path d="M6,1 L1.5,5.5 L6,10" fill="none" stroke="#8a8f99" stroke-width="1.2"/></svg>
<div class="a dv b" style="left:1666px;top:895px;width:24px;height:24px;background:#e8f3ff;color:#1a83f2;line-height:24px;text-align:center;border-radius:2px">1</div>
<svg style="left:1702px;top:902px" width="7" height="11" viewBox="0 0 7 11"><path d="M1,1 L5.5,5.5 L1,10" fill="none" stroke="#8a8f99" stroke-width="1.2"/></svg>
<div class="a dv" style="left:1729px;top:897px;width:78px;height:22px;background:#f5f5f5;border-radius:3px;line-height:22px;padding-left:11px;color:#4a4d52">20条/页<svg style="left:62px;top:9px" width="9" height="5.4" viewBox="0 0 10 6"><path d="M1,1 L5,5 L9,1" fill="none" stroke="#4a4d52" stroke-width="1.2"/></svg></div>
<div class="t" style="left:1824px;top:897px;color:#1a1a1a">前往</div>
<div class="a dv" style="left:1853px;top:896px;width:34px;height:22px;background:#f5f5f5;border-radius:3px;line-height:23px;text-align:center;color:#4a4d52">1</div>
<div class="t" style="left:1892px;top:897px;color:#1a1a1a">页</div>
<div class="a" style="left:1888px;top:850px;width:28px;height:28px;border-radius:14px;background:radial-gradient(circle at 40% 35%,#4aa8ff,#1a7fe8);box-shadow:0 1px 3px rgba(0,0,0,.25)"></div>
<svg style="left:1906px;top:871px" width="8" height="8" viewBox="0 0 8 8"><polygon points="0,0 7,6 3,7" fill="#1a7fe8"/></svg>
<div class="a b" style="left:1888px;top:850px;width:28px;height:28px;line-height:28px;text-align:center;color:#fff;font-size:19px;font-family:'Liberation Sans',sans-serif">?</div>
<div class="a" style="left:442px;top:247px;width:170px;height:297px;background:#fff;border-radius:4px;box-shadow:0 2px 12px rgba(0,0,0,.12)"></div>
<div class="dot" style="left:458px;top:261.5px;background:#3b9efc"></div><div class="t" style="left:478px;top:256.5px;color:#303133">高曝光</div>
<div class="dot" style="left:458px;top:293.5px;background:#3b9efc"></div><div class="t" style="left:478px;top:288.5px;color:#303133">高点击</div>
<div class="dot" style="left:458px;top:325.5px;background:#ffad40"></div><div class="t" style="left:478px;top:320.5px;color:#303133">高出单</div>
<div class="dot" style="left:458px;top:357.5px;background:#f28db5"></div><div class="t" style="left:478px;top:352.5px;color:#303133">重点关注</div>
<div class="rb" style="left:92px;top:314px;width:63px;height:50px"></div>
<div class="rb" style="left:10px;top:573px;width:98px;height:41px"></div>
<div class="rb" style="left:230px;top:343px;width:39px;height:529px"></div>
<div class="rb" style="left:515px;top:205px;width:96px;height:37px"></div>
<div class="tip" style="left:56px;top:271px;width:124px;height:43px;line-height:43px"><span style="position:absolute;left:8px;top:2px">点击标签栏</span></div>
<div class="tip" style="left:37px;top:617px;width:144px;height:43px;line-height:43px"><span style="position:absolute;left:8px;top:2px">添加标签名称</span></div>
<div class="tip" style="left:231px;top:295px;width:124px;height:43px;line-height:43px"><span style="position:absolute;left:8px;top:2px">勾选广告组</span></div>
<div class="tip" style="left:509px;top:158px;width:104px;height:43px;line-height:43px"><span style="position:absolute;left:8px;top:2px">选择标签</span></div>
<div class="num" style="left:19px;top:279px">1</div>
<div class="num" style="left:0px;top:625px">2</div>
<div class="num" style="left:194px;top:302px">3</div>
<div class="num" style="left:472px;top:166px">4</div>
</body></html>
